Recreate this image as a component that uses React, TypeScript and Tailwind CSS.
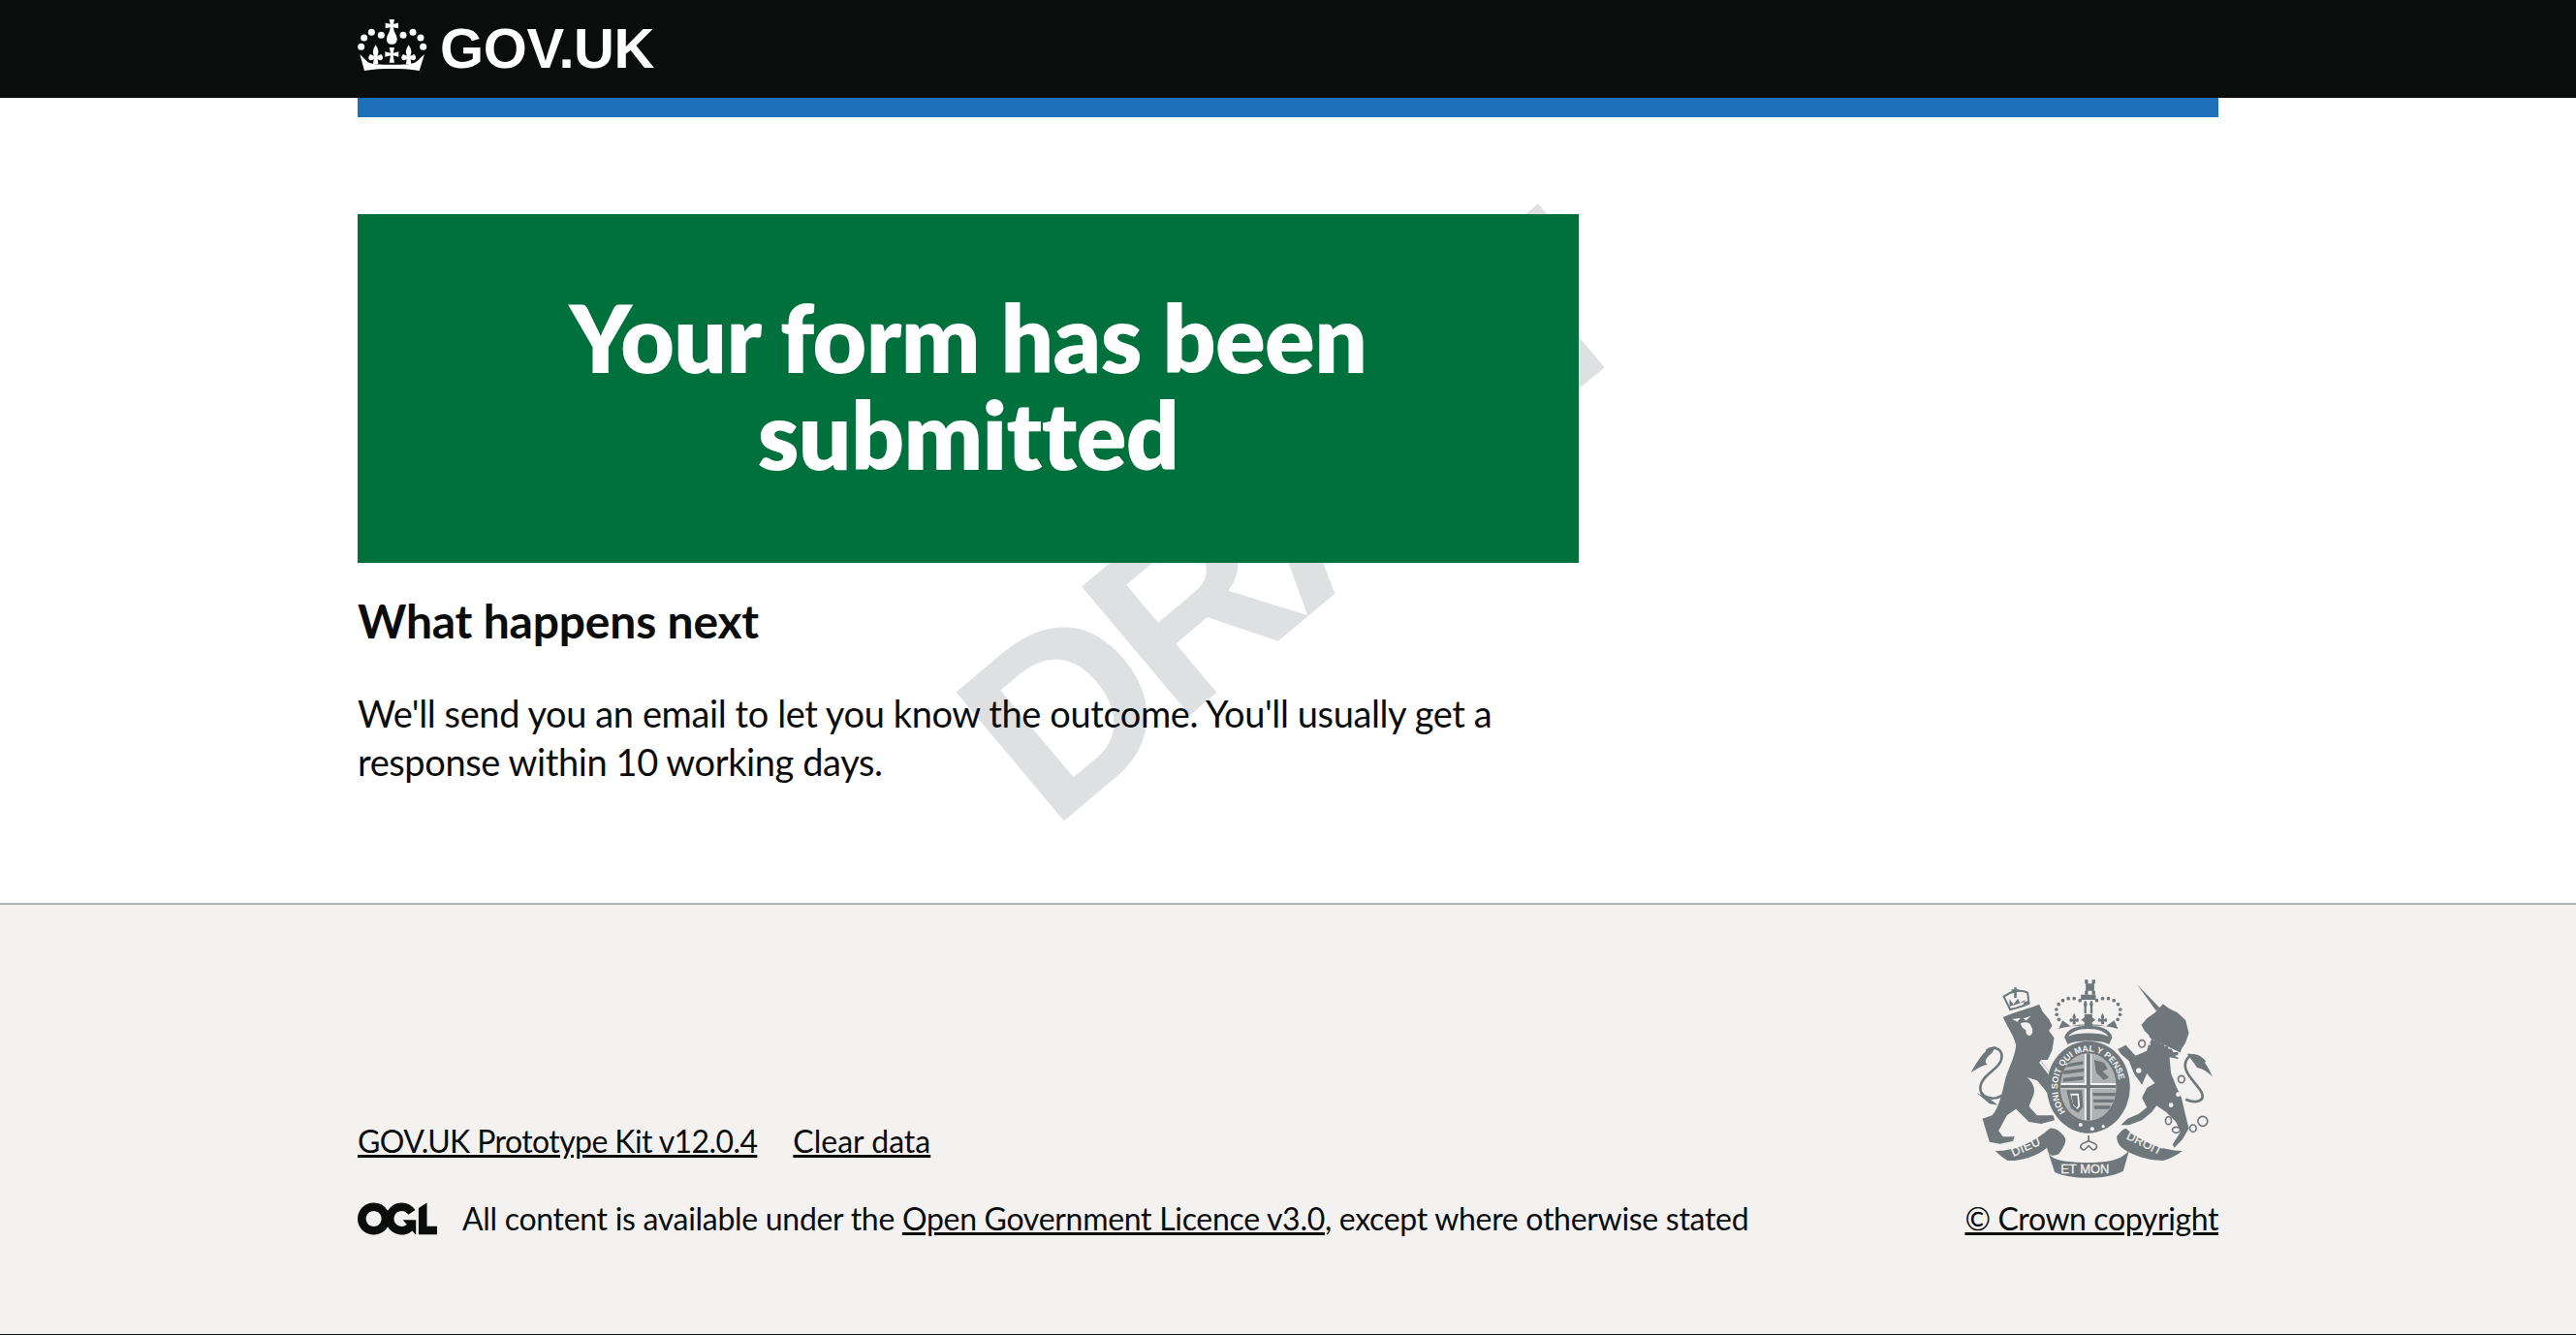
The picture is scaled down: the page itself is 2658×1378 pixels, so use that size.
const font = "font-['Lato','Noto_Sans',sans-serif]";

function Crown() {
  return (
    <svg viewBox="12 18 216 159" width="72" height="53" className="shrink-0 fill-white -mt-[6px]" aria-hidden="true">
      <path d="M110 18h16l-3 14 15-3v17l-15-3 2 12c6 10 9 18 9 25 0 9-6 15-16 15s-16-6-16-15c0-7 3-15 9-25l2-12-15 3V29l15 3z" />
      {[[85, 67], [55, 58], [32, 75], [23, 103], [153, 67], [183, 58], [207, 75], [215, 103]].map(([cx, cy]) => (
        <circle key={cx} cx={cx} cy={cy} r="10.500" />
      ))}
      <path d="M68 97c10 16 10 25 5 34l12-5c9 8 5 22-5 18l-6-2 2 14H60l2-14-6 2c-10 4-14-10-5-18l12 5c-5-9-5-18 5-34z" />
      <path d="M170 97c10 16 10 25 5 34l12-5c9 8 5 22-5 18l-6-2 2 14h-16l2-14-6 2c-10 4-14-10-5-18l12 5c-5-9-5-18 5-34z" />
      <path d="M110 105h16l-4 17 17-4v16l-17-4 4 22h-16l4-22-17 4v-16l17 4z" />
      <path d="M19 126l20 20c10 9 20 12 79 12s69-3 79-12l22-20-16 51c-30-5-55-6-85-6s-55 1-85 6z" />
    </svg>
  );
}

function Ogl() {
  return (
    <svg viewBox="0 0 483.2 195.7" width="82" height="34" className="shrink-0 fill-[#0b0c0c]" aria-hidden="true">
      <path d="M421.5 142.8V.1l-50.7 32.3v161.1h112.4v-50.7zm-122.3-9.6A47.12 47.12 0 0 1 221 97.8c0-26 21.1-47.1 47.1-47.1 16.7 0 31.4 8.7 39.7 21.8l42.7-27.2A97.63 97.63 0 0 0 268.1 0c-36.500 0-68.300 20.100-85.100 49.700A98 98 0 0 0 97.800 0C43.900 0 0 43.900 0 97.800s43.900 97.800 97.800 97.800c36.500 0 68.300-20.100 85.100-49.700a97.760 97.760 0 0 0 149.600 25.400l19.400 22.200h3v-87.800h-80l24.300 27.500zM97.800 145c-26 0-47.100-21.100-47.100-47.100s21.100-47.100 47.100-47.100 47.200 21 47.200 47S123.800 145 97.800 145" />
    </svg>
  );
}

const bg = "#f3f2f1";
const ink = "#6f777b";

function Fleur({ x, y, s = 1 }: { x: number; y: number; s?: number }) {
  return <path transform={`translate(${x} ${y}) scale(${s})`} d="M0-22c6 9 6 15 3 20l8-4c6 5 3 14-3 11l-4-1 1 9h-10l1-9-4 1c-6 3-9-6-3-11l8 4c-3-5-3-11 3-20z" />;
}

function Crest() {
  const beads: [number, number][] = [[455, 146], [438, 134], [420, 128], [402, 128], [385, 134], [372, 146], [365, 162], [366, 178], [373, 193], [385, 207]];
  return (
    <svg viewBox="90 60 770 630" width="257" height="210" aria-hidden="true">
      <defs>
        <clipPath id="shield-clip"><ellipse cx="464" cy="402" rx="86" ry="104" /></clipPath>
      </defs>
      <g fill={ink}>
        {/* lion */}
        <path d="M200 186C230 170 280 160 312 146L322 168 342 192 352 212 342 228 358 250 352 288 338 318 316 318 362 382 375 420 345 432 325 405 305 382 274 372C295 390 302 412 292 432L280 462 305 490 355 490 360 505 318 516 280 510 240 470 212 490 186 538 200 556 236 556 230 570 190 578 158 572 136 500 166 490C185 470 196 425 204 390 212 350 238 310 240 272 232 240 216 222 200 186Z" />
        <path fill="none" stroke={ink} strokeWidth="8" d="M198 428C165 448 125 432 130 400 135 360 200 345 196 303 192 278 165 276 148 290" />
        <path d="M178 276C150 278 130 305 100 358 118 346 134 336 152 332 140 326 146 312 166 296z" />
        <path d="M118 420l40 18 26 20-26-4z" />
        <g fill={bg}>
          <path d="M228 192l26-4-10 12zM262 190l24-8-14 14z" />
          <path d="M254 205c14-6 32-4 34 12 6 8 4 24-6 26-10 0-12-12-12-18-8-2-14-10-16-20z" />
          <path d="M316 320l48 64-6 2-46-60z" />
        </g>
        <g fill="none" stroke={ink} strokeWidth="6">
          <path d="M222 162C240 158 262 152 280 142L276 110C255 98 225 105 202 122z" />
        </g>
        <path d="M220 166L282 146 280 134 216 154zM226 100h8v-6h8v6h8v8h-8v18h-8v-18h-8zM220 130l12 16 14-18 6 14 16-10-8 22-40 10z" />
        {/* central crown */}
        <path d="M453 70h10v12h12V70h10v12h-3v22h3v12h-10v-12h-12v12h-10v-12h3V82h-3z" />
        <path d="M441 116h46v16h-46zM451 136h7v38h-7zM470 136h7v38h-7z" />
        {beads.map(([x, y]) => (
          <g key={x * y}>
            <circle cx={x} cy={y} r="5.500" />
            <circle cx={928 - x} cy={y} r="5.500" />
          </g>
        ))}
        <Fleur x={420} y={195} />
        <Fleur x={508} y={195} />
        <path d="M452 176h24v10l10 8-10 8v18h-24v-18l-10-8 10-8z" />
        <path d="M384 196l25 18c30-8 80-8 110 0l25-18 12 26c-40-14-144-14-184 0z" />
        <path fillRule="evenodd" d="M390 248c8-28 40-36 74-36s66 8 74 36l-10 22c-22-14-106-14-128 0z M402 246c22-14 102-14 124 0-8-14-30-24-62-24s-54 10-62 24z" />
        {/* garter */}
        <ellipse cx="464" cy="402" rx="129" ry="142" />
        <ellipse cx="464" cy="402" rx="86" ry="104" fill={bg} />
        <g clipPath="url(#shield-clip)">
          <path d="M458 296h12v214h-12zM376 396h176v10H376z" />
          <path d="M380 300h72v90h-72zM474 300h80v90h-80zM474 408h80v100h-80zM380 408h72v100h-72z" fill="#aeb2b3" />
          <path d="M388 332l60-10v10l-60 10zM386 352l64-8v11l-64 8zM386 374l62-6v12l-62 6zM482 318l30 8 12 20-16 8 20 18-16 8-24-22zM478 420h72v10h-72zM480 440h70v10h-70zM482 460h50v10h-50z" />
          <path d="M396 412h48l4 52-16 18-22-14z" />
          <path fill={bg} d="M408 422l26 0 4 40-8 8-12-10z" />
          <path d="M412 428l18 0 2 34-6 4-10-12z" />
        </g>
      </g>
      <path id="garter-text-arc" fill="none" d="M396 482A96 112 0 1 1 534 482" />
      <text fill={bg} fontFamily="'Liberation Sans',sans-serif" fontWeight="700" fontSize="27">
        <textPath href="#garter-text-arc" startOffset="4">HONI SOIT QUI MAL Y PENSE</textPath>
      </text>
      <g fill={ink}>
        <path d="M392 492c8-4 12 2 20 8 30 22 74 24 108 0l18-12 6 16-22 22c-34 26-84 26-122 0z" />
        <circle cx="440" cy="519" r="6" fill={bg} /><circle cx="476" cy="532" r="6" fill={bg} /><circle cx="510" cy="524" r="5" fill={bg} />
        {/* unicorn */}
        <path d="M615 85l72 74-14 6z" />
        <path d="M628 210L645 190 670 172 695 145 715 160 740 172 765 195 775 235 765 265 752 285 742 315 715 310 720 360 738 405 752 435 765 490 775 530 755 565 730 590 725 580 750 540 735 510 705 480 675 460 660 480 630 505 590 520 565 520 585 500 620 485 645 465 630 435 645 405 670 390 645 360 630 395 605 360 590 322 565 300 555 285 580 272 610 305 645 290 655 250 650 240 638 228Z" />
        <path fill="none" stroke={ink} strokeWidth="8" d="M765 440C800 455 825 445 815 420 805 395 755 360 765 325 775 295 805 300 825 325" />
        <path d="M770 300C800 296 825 315 848 370 830 352 815 345 800 342 790 325 780 315 770 300z" />
      </g>
      <path fill={bg} d="M654 250l96 46-6 16-96-46z" />
      <path fill={ink} d="M656 262l6-14 4 10 8-6 2 10 10-4 2 10 10-2 2 10 10-2 2 10 10 0 4 10 16 0 0 8-12 4-80-34z" />
      <g fill={bg}>
        <circle cx="620" cy="350" r="9" /><circle cx="752" cy="378" r="9" /><circle cx="742" cy="425" r="7" /><circle cx="720" cy="458" r="7" /><circle cx="610" cy="295" r="6" />
        <path d="M646 260l10 6 0 8-12-6z" />
      </g>
      <g fill="none" stroke={ink} strokeWidth="5">
        <ellipse cx="630" cy="268" rx="10" ry="11" />
        <ellipse cx="620" cy="352" rx="11" ry="12" />
        <ellipse cx="752" cy="378" rx="10" ry="11" />
        <ellipse cx="712" cy="506" rx="9" ry="12" />
        <ellipse cx="736" cy="535" rx="12" ry="9" />
        <ellipse cx="788" cy="530" rx="10" ry="11" />
        <circle cx="818" cy="508" r="15" />
      </g>
      <g fill={ink}>
        <path d="M176 600C240 600 300 570 345 530 362 528 380 540 392 560 398 575 382 595 372 610 350 620 340 612 336 590 300 620 250 632 214 630 200 622 186 610 176 600z" />
        <path d="M552 555C560 545 570 532 580 530 625 570 690 598 755 600 735 615 715 625 695 630 640 630 590 608 570 592 560 584 552 572 552 555z" />
        <path d="M340 606C350 622 370 630 396 632 440 638 490 638 536 630 555 626 575 616 590 600L572 662C520 690 410 690 360 666z" />
        <path fill="none" stroke={ink} strokeWidth="5" d="M465 552v16M465 568c-8 8-20 6-24 14-4 10 8 18 14 12l10-10 10 10c6 6 18-2 14-12-4-8-16-6-24-14z" />
      </g>
      <g fill={bg} fontFamily="'Liberation Sans',sans-serif" fontWeight="400" stroke={bg} strokeWidth="0.800" fontSize="38">
        <text x="232" y="618" transform="rotate(-24 232 618)" letterSpacing="1">DIEU</text>
        <text x="378" y="668" fontSize="39">ET MON</text>
        <text x="580" y="562" fontSize="36" transform="rotate(26 580 562)" letterSpacing="1">DROIT</text>
      </g>
    </svg>
  );
}

export default function App() {
  return (
    <div className={`relative min-h-[1378px] flex flex-col bg-white text-[#0b0c0c] ${font}`}>
      <header className="bg-[#0b0c0c] h-[101px] shrink-0">
        <div className="w-[1920px] mx-auto h-full flex items-center gap-[13px] pb-[2px]">
          <Crown />
          <span className="font-['Liberation_Sans',sans-serif] font-bold text-[58px] leading-none text-white tracking-[-0.4px]">GOV.UK</span>
        </div>
      </header>
      <div className="w-[1920px] mx-auto h-[20px] bg-[#1d70b8] shrink-0" />
      <main className="relative w-[1920px] mx-auto pt-[100px] h-[811px] shrink-0">
        <div aria-hidden="true" className="absolute left-[716px] top-[524px] origin-[0px_213px] -rotate-[40deg] font-['Liberation_Sans',sans-serif] font-bold text-[252px] leading-none tracking-[-12.5px] text-[#dee0e2] select-none whitespace-nowrap">DRAFT</div>
        <div className="relative w-[1260px]">
          <div className="bg-[#00703c] text-white text-center pt-[77px] pb-[83px] px-[70px]">
            <h1 className="font-extrabold text-[96px] leading-[100px] tracking-[-0.6px]">Your form has been submitted</h1>
          </div>
          <h2 className="mt-[30px] font-bold text-[48px] leading-[60px] tracking-[-0.2px]">What happens next</h2>
          <p className="mt-[40px] text-[38px] leading-[50px] tracking-[-0.4px]">We'll send you an email to let you know the outcome. You'll usually get a response within 10 working days.</p>
        </div>
      </main>
      <footer className="flex-1 bg-[#f3f2f1] border-t-2 border-[#b1b4b6] border-b border-b-[#0b0c0c]">
        <div className="w-[1920px] mx-auto flex justify-between items-end pt-[74px]">
          <div className="flex flex-col">
            <div className="flex gap-[37px] text-[32px] leading-[40px] mb-[40px]">
              <a className="underline tracking-[-0.6px]">GOV.UK Prototype Kit v12.0.4</a>
              <a className="underline">Clear data</a>
            </div>
            <div className="flex items-center gap-[26px] text-[32px] leading-[40px] tracking-[-0.3px]">
              <Ogl />
              <span>All content is available under the <a className="underline">Open Government Licence v3.0</a>, except where otherwise stated</span>
            </div>
          </div>
          <div className="flex flex-col items-center">
            <Crest />
            <a className="underline text-[32px] leading-[40px] mt-[20px] tracking-[-0.4px]">© Crown copyright</a>
          </div>
        </div>
      </footer>
    </div>
  );
}
